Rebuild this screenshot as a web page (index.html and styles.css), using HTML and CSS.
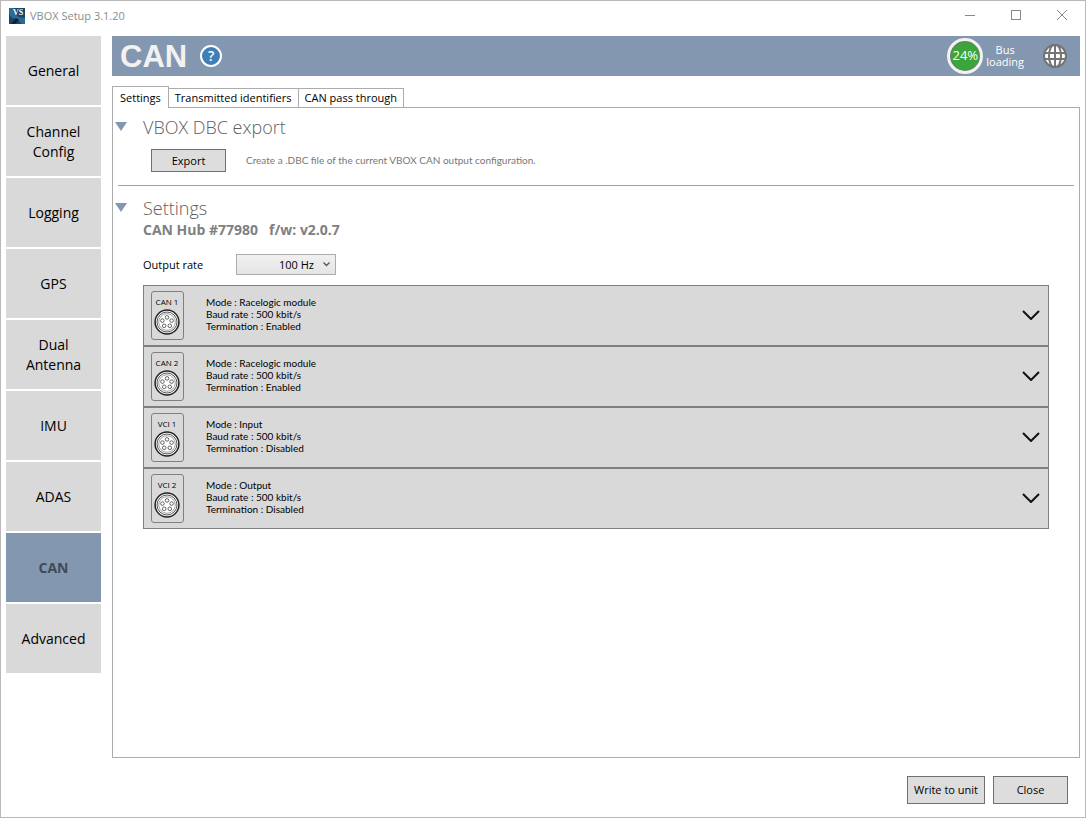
FILE: index.html
```html
<!DOCTYPE html>
<html lang="en">
<head>
    <meta charset="UTF-8">
    <meta name="viewport" content="width=device-width, initial-scale=1.0">
    <title>VBOX Setup 3.1.20</title>
    <link rel="stylesheet" href="styles.css">
</head>
<body>
    <svg class="defs" width="0" height="0" aria-hidden="true">
        <symbol id="connector" viewBox="0 0 26 26">
            <circle cx="13" cy="13" r="11.9" fill="#fff" stroke="#222" stroke-width="1.5"/>
            <circle cx="13" cy="13" r="10" fill="none" stroke="#444" stroke-width="0.9"/>
            <circle cx="13" cy="13" r="8.3" fill="none" stroke="#777" stroke-width="0.7"/>
            <g fill="#fff" stroke="#555" stroke-width="0.9">
                <circle cx="13" cy="8.4" r="1.8"/>
                <circle cx="8.4" cy="11.6" r="1.8"/>
                <circle cx="17.6" cy="11.6" r="1.8"/>
                <circle cx="10.2" cy="16.8" r="1.8"/>
                <circle cx="15.8" cy="16.8" r="1.8"/>
            </g>
        </symbol>
        <symbol id="chevron" viewBox="0 0 18 10">
            <path d="M1 1 L9 9 L17 1" fill="none" stroke="#111" stroke-width="2"/>
        </symbol>
    </svg>

    <div class="window">
        <header class="titlebar">
            <svg class="app-icon" width="16" height="16" viewBox="0 0 16 16">
                <rect width="16" height="16" fill="#174668"/>
                <path d="M0 0 L5 0 L6 6 L10 9 L16 10 L16 16 L13 16 L8 11 L3 10 L0 6 Z" fill="#2c6a94"/>
                <path d="M2 16 L7 10 L10 12 L6 16 Z" fill="#0a2238"/>
                <text x="4" y="7" class="app-icon-text">VS</text>
            </svg>
            <h1>VBOX Setup 3.1.20</h1>
            <div class="window-controls">
                <button type="button" aria-label="Minimize">
                    <svg width="12" height="12" viewBox="0 0 12 12"><path d="M1 5.5H11" stroke="#888" fill="none"/></svg>
                </button>
                <button type="button" aria-label="Maximize">
                    <svg width="12" height="12" viewBox="0 0 12 12"><rect x="1.5" y="0.5" width="9" height="9" stroke="#888" fill="none"/></svg>
                </button>
                <button type="button" aria-label="Close window">
                    <svg width="12" height="12" viewBox="0 0 12 12"><path d="M1 0L11 10M11 0L1 10" stroke="#888" fill="none"/></svg>
                </button>
            </div>
        </header>

        <div class="body">
            <nav class="sidebar">
                <button type="button">General</button>
                <button type="button">Channel Config</button>
                <button type="button">Logging</button>
                <button type="button">GPS</button>
                <button type="button">Dual Antenna</button>
                <button type="button">IMU</button>
                <button type="button">ADAS</button>
                <button type="button" class="active">CAN</button>
                <button type="button">Advanced</button>
            </nav>

            <main>
                <div class="banner">
                    <h2>CAN</h2>
                    <button type="button" class="help" aria-label="Help">?</button>
                    <div class="bus">
                        <span class="bus-value">24%</span>
                        <span class="bus-label">Bus<br>loading</span>
                    </div>
                    <button type="button" class="globe" aria-label="Language">
                        <svg width="24" height="24" viewBox="0 0 24 24">
                            <circle cx="12" cy="12" r="11" fill="#fff" stroke="#747474" stroke-width="2"/>
                            <g fill="none" stroke="#747474" stroke-width="2">
                                <path d="M12 1V23M2 9H22M2 15H22"/>
                                <ellipse cx="12" cy="12" rx="6" ry="12"/>
                            </g>
                        </svg>
                    </button>
                </div>

                <div class="tabs" role="tablist">
                    <button type="button" role="tab" class="selected" aria-selected="true">Settings</button>
                    <button type="button" role="tab">Transmitted identifiers</button>
                    <button type="button" role="tab">CAN pass through</button>
                </div>

                <div class="panel">
                    <section class="export-section">
                        <h3>VBOX DBC export</h3>
                        <div class="export-row">
                            <button type="button" class="btn">Export</button>
                            <p>Create a .DBC file of the current VBOX CAN output configuration.</p>
                        </div>
                    </section>

                    <section class="settings-section">
                        <h3>Settings</h3>
                        <p class="hub"><span>CAN Hub #77980</span><span>f/w: v2.0.7</span></p>
                        <div class="rate-row">
                            <label for="rate">Output rate</label>
                            <div class="select-wrap">
                                <select id="rate">
                                    <option>1 Hz</option>
                                    <option>10 Hz</option>
                                    <option selected>100 Hz</option>
                                </select>
                                <svg width="7" height="5" viewBox="0 0 7 5"><path d="M0.5 0.5L3.5 3.5L6.5 0.5" fill="none" stroke="#555" stroke-width="1.3"/></svg>
                            </div>
                        </div>

                        <div class="ports">
                            <button type="button" class="port">
                                <span class="plug">CAN 1<svg width="26" height="26"><use href="#connector"/></svg></span>
                                <span class="info">Mode : Racelogic module<br>Baud rate : 500 kbit/s<br>Termination : Enabled</span>
                                <svg class="chevron" width="18" height="10"><use href="#chevron"/></svg>
                            </button>
                            <button type="button" class="port">
                                <span class="plug">CAN 2<svg width="26" height="26"><use href="#connector"/></svg></span>
                                <span class="info">Mode : Racelogic module<br>Baud rate : 500 kbit/s<br>Termination : Enabled</span>
                                <svg class="chevron" width="18" height="10"><use href="#chevron"/></svg>
                            </button>
                            <button type="button" class="port">
                                <span class="plug">VCI 1<svg width="26" height="26"><use href="#connector"/></svg></span>
                                <span class="info">Mode : Input<br>Baud rate : 500 kbit/s<br>Termination : Disabled</span>
                                <svg class="chevron" width="18" height="10"><use href="#chevron"/></svg>
                            </button>
                            <button type="button" class="port">
                                <span class="plug">VCI 2<svg width="26" height="26"><use href="#connector"/></svg></span>
                                <span class="info">Mode : Output<br>Baud rate : 500 kbit/s<br>Termination : Disabled</span>
                                <svg class="chevron" width="18" height="10"><use href="#chevron"/></svg>
                            </button>
                        </div>
                    </section>
                </div>

                <footer>
                    <button type="button" class="btn">Write to unit</button>
                    <button type="button" class="btn">Close</button>
                </footer>
            </main>
        </div>
    </div>
</body>
</html>
```
FILE: styles.css
```css
* {
    box-sizing: border-box;
}
body {
    margin: 0;
    font-family: "Open Sans", "Noto Sans", sans-serif;
    font-size: 11px;
    color: #000;
    background: #fff;
}
h1, h2, h3, p {
    margin: 0;
}
button, select {
    font: inherit;
    color: inherit;
    margin: 0;
    padding: 0;
}
svg {
    display: block;
}
.defs {
    position: absolute;
}
.window {
    display: flex;
    flex-direction: column;
    min-height: 100vh;
    border: 1px solid #b8b8b8;
}

/* title bar */
.titlebar {
    display: flex;
    align-items: center;
    height: 35px;
    padding: 0 0 6px 8px;
}
.titlebar h1 {
    margin-left: 5px;
    font-size: 11px;
    font-weight: 400;
    color: #8c8c8c;
}
.app-icon-text {
    font: bold 8px "Liberation Serif", serif;
    fill: #fff;
}
.window-controls {
    display: flex;
    margin-left: auto;
}
.window-controls button {
    display: flex;
    justify-content: center;
    align-items: center;
    width: 46px;
    height: 28px;
    border: none;
    background: none;
}

.body {
    display: flex;
    flex: 1;
    padding: 0 5px 13px;
}

/* left menu */
.sidebar {
    display: flex;
    flex-direction: column;
    gap: 2px;
    width: 95px;
    margin-right: 11px;
}
.sidebar button {
    height: 69px;
    padding: 0 14px;
    border: none;
    background: #d9d9d9;
    font-size: 14px;
    line-height: 20px;
}
.sidebar .active {
    background: #8497b0;
    color: #404a58;
    font-weight: 700;
}

main {
    display: flex;
    flex-direction: column;
    flex: 1;
    min-width: 0;
}
.banner {
    display: flex;
    align-items: center;
    height: 40px;
    padding: 0 13px 0 8px;
    background: #8497b0;
    color: #fff;
}
.banner h2 {
    padding-top: 2px;
    font: bold 31px "Liberation Sans", Arial, sans-serif;
    color: #f2f2f2;
}
.help {
    width: 22px;
    height: 22px;
    margin-left: 13px;
    border: 2px solid #fff;
    border-radius: 50%;
    background: #3f7fb5;
    font-size: 14px;
    font-weight: 600;
    line-height: 18px;
}
.bus {
    display: flex;
    align-items: center;
    margin-left: auto;
}
.bus-value {
    width: 36px;
    height: 36px;
    border: 3px solid #f2f2f2;
    border-radius: 50%;
    background: #3aa53a;
    box-shadow: inset 0 0 0 1px #777;
    font-size: 13px;
    line-height: 29px;
    text-align: center;
}
.bus-label {
    margin-left: 3px;
    line-height: 12px;
    text-align: center;
}
.globe {
    margin-left: 19px;
    border: none;
    background: none;
}

/* tabs */
.tabs {
    display: flex;
    align-items: flex-end;
    margin-top: 10px;
}
.tabs button {
    height: 19px;
    padding: 0 6px;
    border: 1px solid #acacac;
    border-bottom: none;
    border-left: none;
    background: #fff;
    line-height: 18px;
}
.tabs .selected {
    position: relative;
    height: 22px;
    margin-bottom: -1px;
    padding: 0 7px;
    border-left: 1px solid #acacac;
}
.panel {
    flex: 1;
    padding: 8px 5px;
    border: 1px solid #acacac;
}

section {
    padding: 0 25px;
}
.export-section {
    padding-bottom: 13px;
    border-bottom: 1px solid #a0a0a0;
}
.settings-section {
    padding-top: 11px;
}
h3 {
    position: relative;
    font-size: 18px;
    font-weight: 300;
    line-height: 22px;
    color: #606060;
}
/* expander arrow */
h3::before {
    content: "";
    position: absolute;
    top: 6px;
    left: -28px;
    border: 6px solid transparent;
    border-top: 9px solid #8497b0;
    border-bottom: none;
}
.btn {
    border: 1px solid #707070;
    background: #ddd;
}
.export-row {
    display: flex;
    align-items: center;
    margin: 11px 0 0 8px;
}
.export-row .btn {
    width: 75px;
    height: 23px;
}
.export-row p {
    margin-left: 20px;
    padding-bottom: 2px;
    font-family: Lato, "Open Sans", sans-serif;
    font-size: 10px;
    color: #777;
}
.hub {
    display: flex;
    gap: 11px;
    margin-top: 1px;
    font-size: 14px;
    font-weight: 700;
    line-height: 20px;
    color: #808080;
}
.rate-row {
    display: flex;
    align-items: center;
    margin: 14px 0 10px;
}
.rate-row label {
    width: 93px;
}
.select-wrap {
    position: relative;
}
.select-wrap select {
    width: 100px;
    height: 21px;
    padding-right: 21px;
    border: 1px solid #acacac;
    border-radius: 0;
    background: linear-gradient(#f0f0f0, #e5e5e5);
    appearance: none;
    text-align: right;
    text-align-last: right;
}
.select-wrap svg {
    position: absolute;
    top: 8px;
    right: 6px;
    pointer-events: none;
}

/* port list */
.ports {
    border: 1px solid #808080;
}
.port {
    display: flex;
    align-items: center;
    width: 100%;
    height: 61px;
    padding: 0 8px 0 7px;
    border: none;
    border-bottom: 2px solid #808080;
    background: #d9d9d9;
    text-align: left;
}
.port:last-child {
    height: 59px;
    border-bottom: none;
}
.plug {
    display: flex;
    flex-direction: column;
    align-items: center;
    width: 33px;
    height: 49px;
    border: 1px solid #808080;
    border-radius: 3px;
    padding: 3px 1px 0 0;
    font-size: 8px;
    line-height: 14px;
}
.info {
    margin-left: 22px;
    padding-bottom: 4px;
    font-family: Lato, "Open Sans", sans-serif;
    font-size: 10px;
    line-height: 12px;
}
.chevron {
    margin: 0 0 2px auto;
}

footer {
    display: flex;
    justify-content: flex-end;
    gap: 8px;
    margin-top: 18px;
    padding-right: 12px;
}
footer .btn {
    min-width: 75px;
    height: 28px;
    padding: 0 6px 2px;
}
```
